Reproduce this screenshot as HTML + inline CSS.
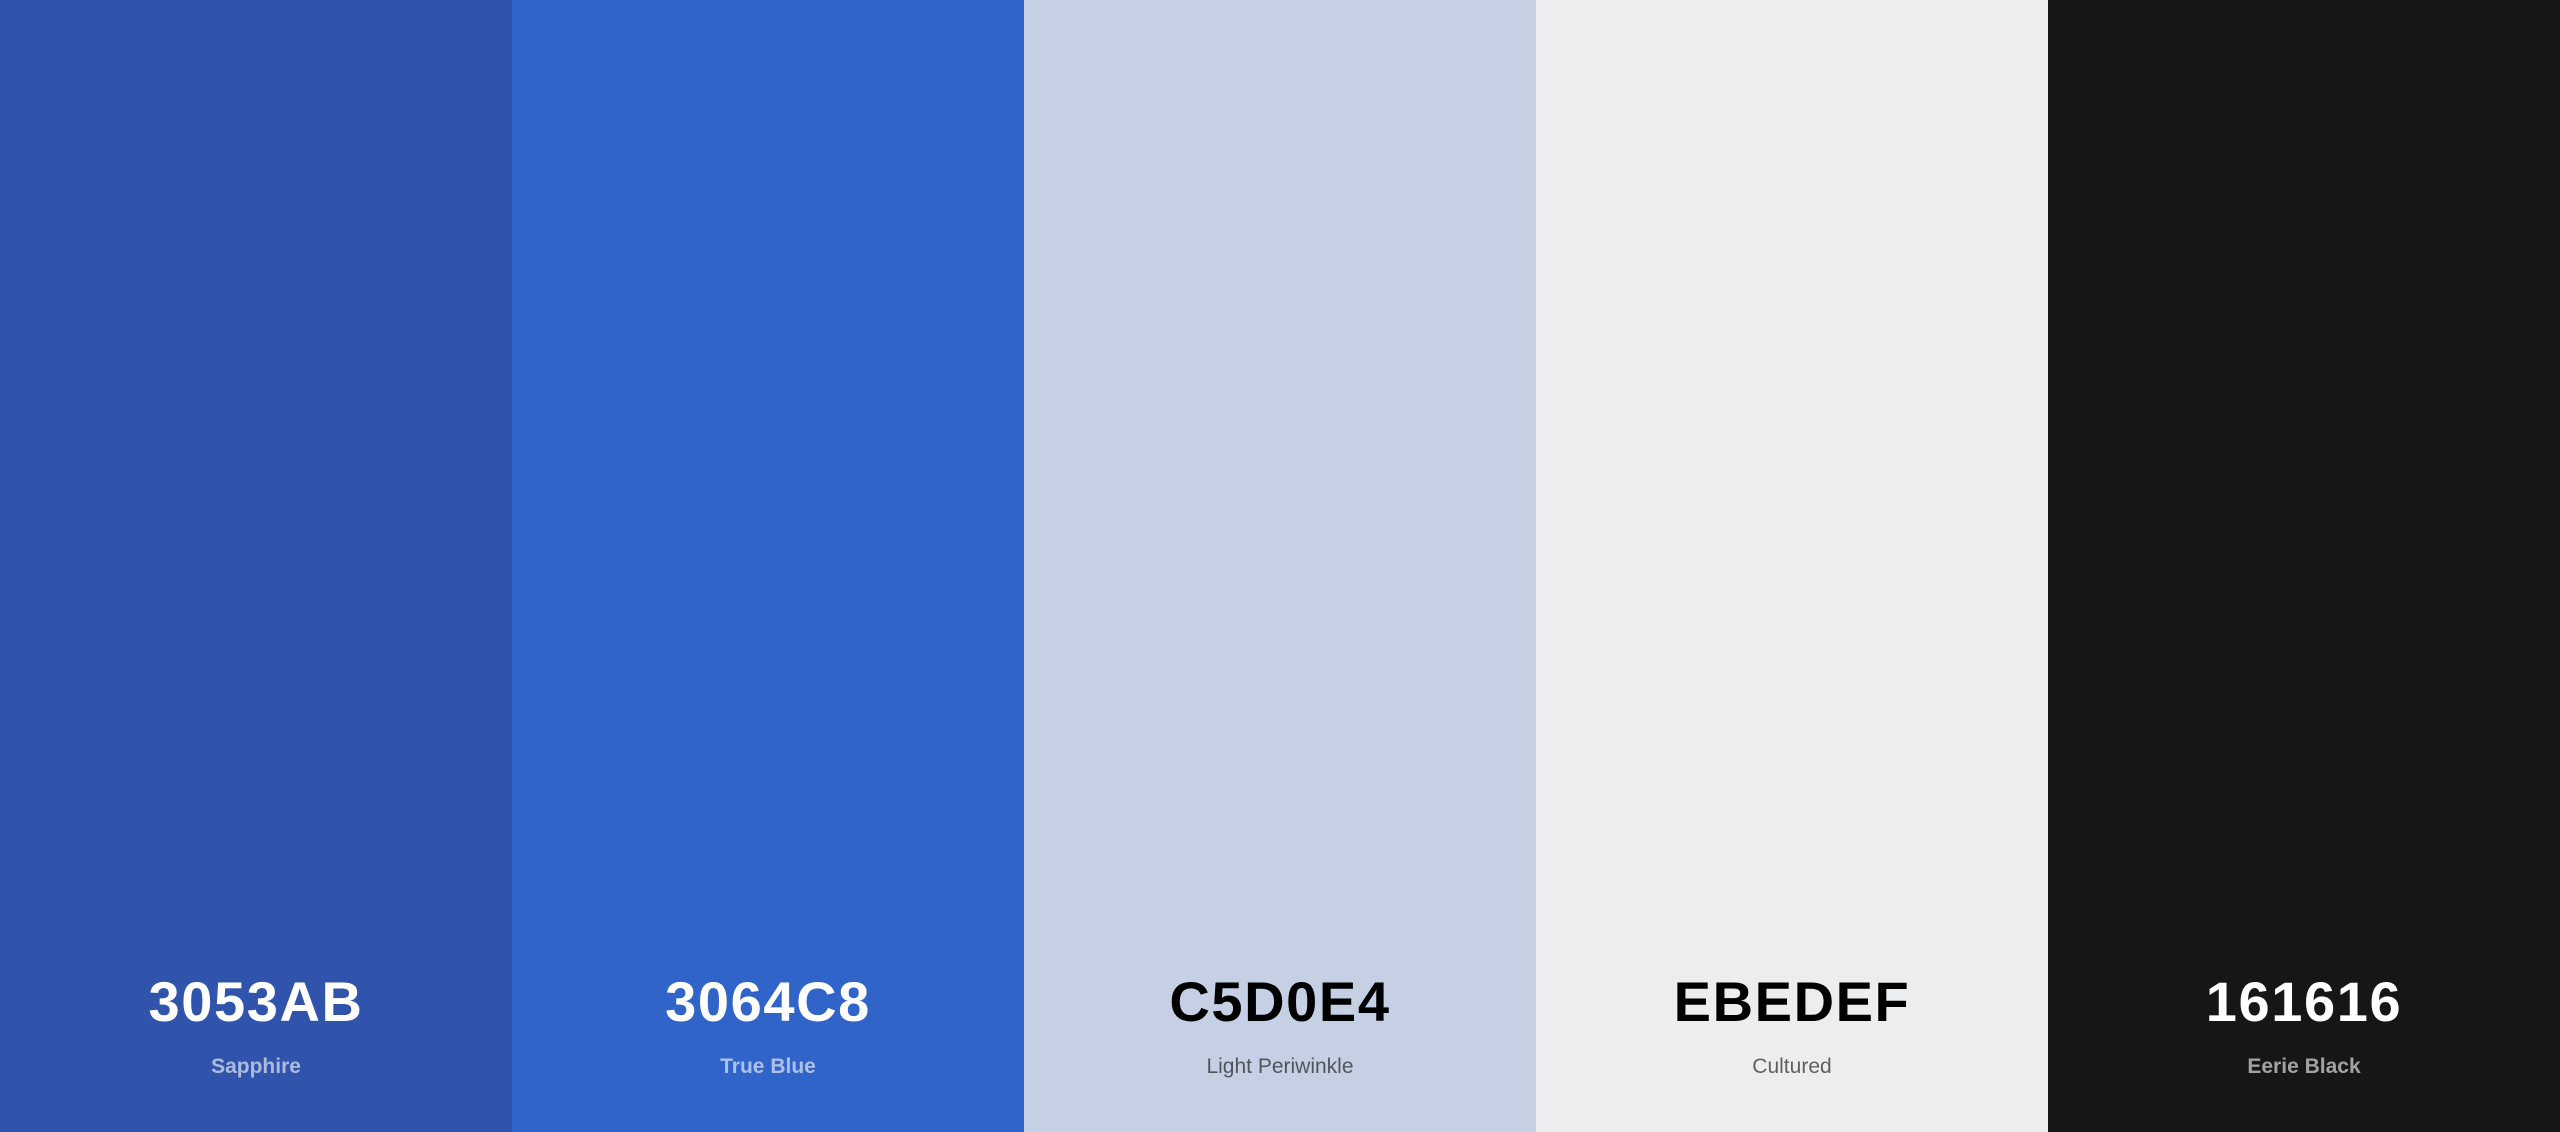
<!DOCTYPE html><html><head><style>
html,body{margin:0;padding:0;width:2560px;height:1132px;overflow:hidden}
.w{display:flex;width:2560px;height:1132px}
.c{width:512px;height:1132px;position:relative;font-family:"Liberation Sans",sans-serif;text-align:center}
.h{position:absolute;left:0;right:0;top:967px;font-size:56px;font-weight:bold;letter-spacing:1.6px;line-height:70px}
.n{position:absolute;left:0;right:0;top:1053px;font-size:21px;font-weight:bold;line-height:28px}
</style></head><body><div class="w">
<div class="c" style="background:#3053AB;color:#fff"><div class="h">3053AB</div><div class="n" style="color:rgba(255,255,255,.6)">Sapphire</div></div>
<div class="c" style="background:#3064C8;color:#fff"><div class="h">3064C8</div><div class="n" style="color:rgba(255,255,255,.6)">True Blue</div></div>
<div class="c" style="background:#C5D0E4;color:#000"><div class="h">C5D0E4</div><div class="n" style="color:rgba(0,0,0,.6);font-weight:normal">Light Periwinkle</div></div>
<div class="c" style="background:#EBEDEF;color:#000"><div class="h">EBEDEF</div><div class="n" style="color:rgba(0,0,0,.6);font-weight:normal">Cultured</div></div>
<div class="c" style="background:#161616;color:#fff"><div class="h">161616</div><div class="n" style="color:rgba(255,255,255,.6)">Eerie Black</div></div>
</div></body></html>
